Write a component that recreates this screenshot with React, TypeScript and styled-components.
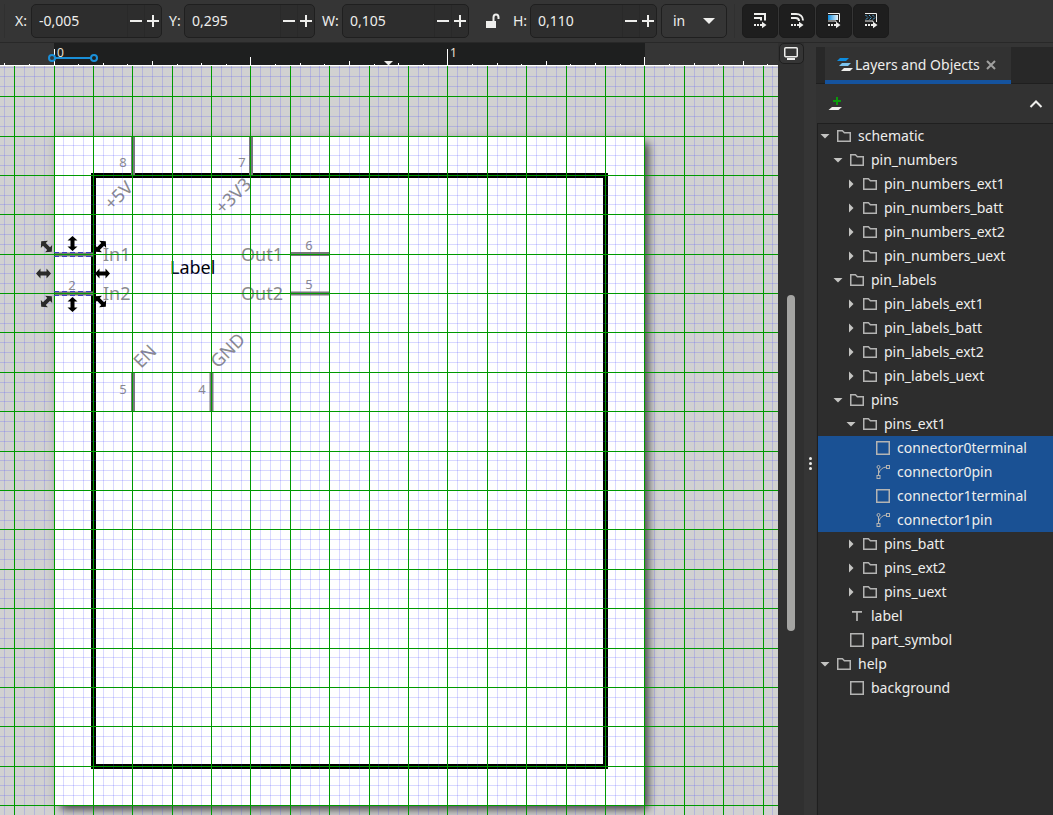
import React from 'react';
import styled, { createGlobalStyle } from 'styled-components';

const Global = createGlobalStyle`
  * { box-sizing: border-box; }
  html, body, #root { height: 100%; }
  body {
    margin: 0;
    background: #353535;
    color: #eeeeec;
    font: 14px/20px "Noto Sans", "Open Sans", sans-serif;
    overflow: hidden;
  }
  button, input, select { font: inherit; color: inherit; margin: 0; }
`;

const Window = styled.div`
  display: flex;
  flex-direction: column;
  height: 100vh;
`;

const Toolbar = styled.header`
  display: flex;
  align-items: center;
  flex: none;
  height: 43px;
  padding: 0 0 1px 4px;
  border-bottom: 1px solid #282828;
  background: #353535;
`;

const Separator = styled.i<{ $gap: number }>`
  width: 1px;
  height: 34px;
  margin-right: ${(p) => p.$gap}px;
  background: #303030;
`;

const FieldLabel = styled.label<{ $width: number }>`
  width: ${(p) => p.$width}px;
  flex: none;
`;

const SpinBox = styled.div<{ $width: number; $gap: number }>`
  display: flex;
  width: ${(p) => p.$width}px;
  height: 34px;
  margin-right: ${(p) => p.$gap}px;
  border: 1px solid #1f1f1f;
  border-radius: 5px;
  background: #2d2d2d;
  overflow: hidden;
`;

const SpinInput = styled.input`
  flex: 1;
  min-width: 0;
  padding: 0 7px;
  border: 0;
  outline: 0;
  background: none;
`;

const SpinButton = styled.button`
  display: flex;
  align-items: center;
  justify-content: center;
  width: 17px;
  padding: 0;
  border: 0;
  border-left: 1px solid #292929;
  background: none;
`;

const LockButton = styled.button`
  display: flex;
  width: 24px;
  margin: 0 4px 0 9px;
  padding: 0;
  border: 0;
  background: none;
`;

const UnitBox = styled.div`
  display: grid;
  align-items: center;
  width: 66px;
  height: 34px;
  margin-right: 7px;
  border: 1px solid #1f1f1f;
  border-radius: 5px;
  background: #353535;

  select {
    grid-area: 1 / 1;
    height: 32px;
    padding: 0 11px;
    border: 0;
    outline: 0;
    appearance: none;
    background: none;
  }
  svg {
    grid-area: 1 / 1;
    justify-self: end;
    margin-right: 11px;
    pointer-events: none;
  }
`;

const ToggleButton = styled.button`
  display: flex;
  align-items: center;
  justify-content: center;
  width: 36px;
  height: 34px;
  margin-right: 1px;
  padding: 0;
  border: 1px solid #1b1b1b;
  border-radius: 5px;
  background: #1e1e1e;
`;

const Main = styled.main`
  display: flex;
  flex: 1;
  min-height: 0;
`;

const Desk = styled.section`
  display: flex;
  flex-direction: column;
  flex: 1;
  min-width: 0;
`;

const RulerArea = styled.svg`
  display: block;
  flex: none;
  width: 100%;
  height: 23px;
  background: #353535;
`;

const CanvasArea = styled.svg`
  display: block;
  flex: 1;
  min-height: 0;
  width: 100%;
  background: #d1d1d1;
`;

const ScrollColumn = styled.div`
  display: flex;
  flex-direction: column;
  align-items: center;
  flex: none;
  width: 26px;
  background: #303030;
`;

const DisplayButton = styled.button`
  display: flex;
  align-items: center;
  justify-content: center;
  width: 25px;
  height: 21px;
  padding: 0;
  border: 1px solid #1f1f1f;
  border-radius: 5px;
  background: #353535;
`;

const ScrollTrack = styled.div`
  display: grid;
  flex: 1;
  grid-template-rows: 231fr 336fr 184fr;
`;

const ScrollThumb = styled.div`
  grid-row: 2;
  width: 8px;
  border-radius: 4px;
  background: #a4a4a2;
`;

const PaneHandle = styled.div`
  display: flex;
  flex-direction: column;
  align-items: center;
  justify-content: center;
  gap: 2px;
  flex: none;
  width: 12px;
  padding-top: 68px;
  background: #353535;

  i {
    width: 3px;
    height: 3px;
    border-radius: 2px;
    background: #eeeeec;
  }
`;

const Dock = styled.aside`
  flex: none;
  width: 237px;
  margin-top: 4px;
  background: #323232;
`;

const TabStrip = styled.div`
  display: flex;
  height: 37px;
  padding-left: 9px;
  border-bottom: 1px solid #1f1f1f;
  background: #282828;
`;

const Tab = styled.div`
  display: flex;
  align-items: center;
  width: 186px;
  height: 37px;
  padding: 2px 0 0 12px;
  border-bottom: 4px solid #15539e;
  background: #323232;
`;

const TabTitle = styled.span`
  width: 133px;
  padding-left: 2px;
  white-space: nowrap;
`;

const PlainButton = styled.button`
  display: flex;
  padding: 0;
  border: 0;
  background: none;
`;

const DockTools = styled.div`
  display: flex;
  align-items: center;
  justify-content: space-between;
  height: 39px;
  padding: 0 10px 0 12px;
`;

const Tree = styled.ul`
  margin: 0 0 0 1px;
  padding: 0;
  list-style: none;
  border: 1px solid #1f1f1f;
  border-width: 1px 0 0 1px;
  background: #2d2d2d;
  height: calc(100% - 76px);
`;

const TreeRow = styled.li<{ $depth: number; $selected: boolean }>`
  display: flex;
  align-items: center;
  height: 24px;
  padding-left: ${(p) => p.$depth * 13}px;
  background: ${(p) => (p.$selected ? '#1a5194' : 'transparent')};
  white-space: nowrap;

  svg { flex: none; }
`;

const Arrow = styled.svg`
  margin: 0 6px 0 1px;
`;

const ItemIcon = styled.svg`
  margin-right: 6px;
`;

type Kind = 'folder' | 'rect' | 'path' | 'text';
type Node = [name: string, depth: number, kind: Kind, state: 'open' | 'closed' | '', selected?: boolean];

const nodes: Node[] = [
  ['schematic', 0, 'folder', 'open'],
  ['pin_numbers', 1, 'folder', 'open'],
  ['pin_numbers_ext1', 2, 'folder', 'closed'],
  ['pin_numbers_batt', 2, 'folder', 'closed'],
  ['pin_numbers_ext2', 2, 'folder', 'closed'],
  ['pin_numbers_uext', 2, 'folder', 'closed'],
  ['pin_labels', 1, 'folder', 'open'],
  ['pin_labels_ext1', 2, 'folder', 'closed'],
  ['pin_labels_batt', 2, 'folder', 'closed'],
  ['pin_labels_ext2', 2, 'folder', 'closed'],
  ['pin_labels_uext', 2, 'folder', 'closed'],
  ['pins', 1, 'folder', 'open'],
  ['pins_ext1', 2, 'folder', 'open'],
  ['connector0terminal', 3, 'rect', '', true],
  ['connector0pin', 3, 'path', '', true],
  ['connector1terminal', 3, 'rect', '', true],
  ['connector1pin', 3, 'path', '', true],
  ['pins_batt', 2, 'folder', 'closed'],
  ['pins_ext2', 2, 'folder', 'closed'],
  ['pins_uext', 2, 'folder', 'closed'],
  ['label', 1, 'text', ''],
  ['part_symbol', 1, 'rect', ''],
  ['help', 0, 'folder', 'open'],
  ['background', 1, 'rect', ''],
];

function KindIcon({ kind }: { kind: Kind }) {
  const stroke = '#b4b4b3';
  return (
    <ItemIcon width="16" height="16" viewBox="0 0 16 16" fill="none" stroke={stroke} strokeWidth="1.5">
      {kind === 'folder' && <path d="M1.75 2.75H6.4L8.4 4.75H14.25V13.25H1.75Z" />}
      {kind === 'rect' && <rect x="1.75" y="1.75" width="12.5" height="12.5" />}
      {kind === 'path' && (
        <g strokeWidth="1">
          <circle cx="3.5" cy="3" r="1.5" />
          <rect x="11.5" y="1.5" width="3" height="3" />
          <rect x="2" y="11.5" width="3" height="3" />
          <path d="M3.5 4.5V11.5M3.7 9.5C5 5.5 7.5 3.2 11.5 3" />
        </g>
      )}
      {kind === 'text' && <path d="M3 3.8H13M8 3.8V13" strokeWidth="1.7" />}
    </ItemIcon>
  );
}

interface SpinProps {
  id: string;
  label: string;
  labelWidth: number;
  width: number;
  value: string;
  gap?: number;
}

function Spin({ id, label, labelWidth, width, value, gap = 7 }: SpinProps) {
  return (
    <>
      <FieldLabel htmlFor={id} $width={labelWidth}>{label}</FieldLabel>
      <SpinBox $width={width} $gap={gap}>
        <SpinInput id={id} defaultValue={value} />
        <SpinButton aria-label={`Decrease ${label}`}>
          <svg width="12" height="12" stroke="#eeeeec" strokeWidth="2"><path d="M0 6H12" /></svg>
        </SpinButton>
        <SpinButton aria-label={`Increase ${label}`}>
          <svg width="12" height="12" stroke="#eeeeec" strokeWidth="2"><path d="M0 6H12M6 0V12" /></svg>
        </SpinButton>
      </SpinBox>
    </>
  );
}

const dashArrow = (
  <path d="M0 11H2V13H0ZM3 11H5V13H3ZM6 11H9V13H6ZM8 8.800L12.500 12L8 15.200Z" fill="#eeeeec" />
);

function CornerIcon({ kind }: { kind: 'stroke' | 'corner' | 'gradient' | 'pattern' }) {
  return (
    <svg width="13" height="16" viewBox="0 0 13 16" fill="none">
      {kind === 'stroke' && <path d="M0 1H11V7.500M0 5H7V7.500" stroke="#eeeeec" strokeWidth="2" />}
      {kind === 'corner' && <path d="M0 1H5C9 1 12 3.500 12 7.500M0 5H4.500C7 5 8 6 8 8" stroke="#eeeeec" strokeWidth="2" />}
      {(kind === 'gradient' || kind === 'pattern') && <path d="M0 0.500H11.500V9M8 9V8H0" stroke="#eeeeec" />}
      {kind === 'gradient' && (
        <>
          <linearGradient id="fade"><stop stopColor="#0c8ce0" /><stop offset="1" stopColor="#e8f4fb" /></linearGradient>
          <rect y="2" width="10" height="5" fill="url(#fade)" />
        </>
      )}
      {kind === 'pattern' && <path d="M0.500 2L3 4.500L0.500 7M4 2L6.500 4.500L4 7M7.500 2L10 4.500L7.500 7" stroke="#4fb3ee" strokeDasharray="1.400 0.700" />}
      {dashArrow}
    </svg>
  );
}

// Spacing of a tenth of an inch on the desk at the current zoom.
const STEP = 39.39;
const ORIGIN_X = 54;
const ORIGIN_Y = 30.63;
const range = (from: number, to: number) => Array.from({ length: to - from }, (_, i) => i + from);

const rulerTicks = range(-3, 60).map((n) => {
  const x = Math.floor(ORIGIN_X + (n * STEP * 10) / 16);
  const h = n % 16 === 0 ? 17 : n % 8 === 0 ? 9 : n % 4 === 0 ? 5 : n % 2 === 0 ? 3 : 2;
  return `M${x}.5 ${23 - h}V23`;
}).join('');

const columns = range(-6, 160).map((n) => ({ n, at: Math.floor(ORIGIN_X + (n * STEP) / 4) }));
const rows = range(-4, 120).map((n) => ({ n, at: Math.floor(ORIGIN_Y + (n * STEP) / 4) }));
const gridPath = (major: boolean) =>
  columns.filter(({ n }) => (n % 4 === 0) === major).map(({ at }) => `M${at}.5 0V2000`).join('') +
  rows.filter(({ n }) => (n % 4 === 0) === major).map(({ at }) => `M0 ${at}.5H3000`).join('');

function Ruler() {
  return (
    <RulerArea>
      <rect x="54" width="591" height="23" fill="#1e1f1f" />
      <path d="M0 22.500H3000" stroke="#fff" />
      <path d={rulerTicks} stroke="#fff" />
      <path d="M384 18H393L388.500 22.500Z" fill="#eeeeec" />
      <g fontSize="12" fill="#e8e0d4">
        <text x="57" y="14">0</text>
        <text x="450" y="14">1</text>
      </g>
      <g stroke="#1a8fd8" strokeWidth="2" fill="none">
        <path d="M55 15H91" />
        <circle cx="52" cy="15" r="3" />
        <circle cx="94" cy="15" r="3" />
      </g>
    </RulerArea>
  );
}

const handles: [x: number, y: number, angle: number, light: boolean][] = [
  [46.500, 180.500, 45, true],
  [72.500, 177.500, 90, false],
  [100.500, 180.500, -45, false],
  [43.500, 207.500, 0, true],
  [102.500, 207.500, 0, false],
  [46.500, 235.500, -45, true],
  [72.500, 238.500, 90, false],
  [100.500, 235.500, 45, false],
];

function Canvas() {
  return (
    <CanvasArea>
      <defs>
        <filter id="soft" x="-10%" y="-10%" width="120%" height="120%"><feGaussianBlur stdDeviation="4" /></filter>
      </defs>
      <rect x="52" y="68" width="593" height="672" fill="#888" opacity="0.3" filter="url(#soft)" />
      <rect x="61" y="77" width="588" height="667" fill="#000" opacity="0.6" filter="url(#soft)" />
      <rect x="54" y="70" width="591" height="670" fill="#fff" />
      <rect x="93.500" y="109.500" width="512" height="591" fill="none" stroke="#000" strokeWidth="5" />

      <g stroke="#787878" strokeWidth="4">
        <path d="M133 70V109M251 70V109M133 306V345M211.500 306V345" />
        <path d="M290 188H329M290 227.500H329M54 188.500H93M54 227.500H93" />
      </g>
      <g fill="#8c8c8c">
        <g fontSize="13" textAnchor="middle">
          <text x="123" y="101">8</text>
          <text x="242" y="101">7</text>
          <text x="309" y="184">6</text>
          <text x="309" y="223">5</text>
          <text x="72" y="224">2</text>
          <text x="123" y="328">5</text>
          <text x="202" y="328">4</text>
        </g>
        <g fontSize="18">
          <text x="103" y="195">In1</text>
          <text x="103" y="234">In2</text>
          <text x="241" y="195">Out1</text>
          <text x="241" y="234">Out2</text>
          <text transform="translate(112 145) rotate(-45)">+5V</text>
          <text transform="translate(223 149) rotate(-45)">+3V3</text>
          <text transform="translate(141 303) rotate(-45)">EN</text>
          <text transform="translate(218 303) rotate(-45)">GND</text>
        </g>
        <text x="170" y="208" fontSize="18" fill="#000">Label</text>
      </g>

      <path d={gridPath(false)} stroke="#3f3fff" strokeOpacity="0.2" />
      <path d={gridPath(true)} stroke="#009900" />
      <path d="M54 186.500H94M54 190.500H94M54 225.500H94M54 229.500H94" stroke="#4040c0" strokeDasharray="5 3" />

      {handles.map(([x, y, angle, light]) => (
        <path
          key={`${x}-${y}`}
          transform={`translate(${x} ${y}) rotate(${angle})`}
          d="M-7.500 0L-3 -5V-2H3V-5L7.500 0L3 5V2H-3V5Z"
          fill={light ? '#2a2a2a' : '#000'}
        />
      ))}
    </CanvasArea>
  );
}

export default function App() {
  return (
    <Window>
      <Global />
      <Toolbar>
        <Separator $gap={10} />
        <Spin id="x" label="X:" labelWidth={16} width={131} value="-0,005" />
        <Spin id="y" label="Y:" labelWidth={15} width={131} value="0,295" />
        <Spin id="w" label="W:" labelWidth={20} width={127} value="0,105" />
        <LockButton aria-label="Lock width and height">
          <svg width="16" height="16" viewBox="0 0 16 16">
            <path d="M1 8H11V15H1Z" fill="#eeeeec" />
            <path d="M8.500 8V4.500C8.500 0.500 13.500 0.500 13.500 4.500V6" fill="none" stroke="#eeeeec" strokeWidth="2" />
          </svg>
        </LockButton>
        <Spin id="h" label="H:" labelWidth={17} width={127} value="0,110" gap={4} />
        <UnitBox>
          <select aria-label="Units"><option>in</option></select>
          <svg width="12" height="6"><path d="M0 0H12L6 6Z" fill="#eeeeec" /></svg>
        </UnitBox>
        <Separator $gap={7} />
        <ToggleButton aria-label="Scale stroke width"><CornerIcon kind="stroke" /></ToggleButton>
        <ToggleButton aria-label="Scale rounded corners"><CornerIcon kind="corner" /></ToggleButton>
        <ToggleButton aria-label="Move gradients"><CornerIcon kind="gradient" /></ToggleButton>
        <ToggleButton aria-label="Move patterns"><CornerIcon kind="pattern" /></ToggleButton>
      </Toolbar>
      <Main>
        <Desk>
          <Ruler />
          <Canvas />
        </Desk>
        <ScrollColumn>
          <DisplayButton aria-label="Display options">
            <svg width="14" height="13" viewBox="0 0 14 13" fill="none" stroke="#eeeeec">
              <rect x="0.750" y="0.750" width="12.500" height="9" rx="1" strokeWidth="1.500" />
              <path d="M3 12H11" strokeWidth="2" />
            </svg>
          </DisplayButton>
          <ScrollTrack><ScrollThumb /></ScrollTrack>
        </ScrollColumn>
        <PaneHandle><i /><i /><i /></PaneHandle>
        <Dock>
          <TabStrip>
            <Tab>
              <svg width="16" height="14" viewBox="0 0 16 14">
                <path d="M3 0H12L9 3H0Z" fill="#0c8ce0" />
                <path d="M5 5H14L11 8H2Z" fill="#7cc4ee" />
                <path d="M7 10H16L13 13H4Z" fill="#eeeeec" />
              </svg>
              <TabTitle>Layers and Objects</TabTitle>
              <PlainButton aria-label="Close tab">
                <svg width="10" height="10" stroke="#a0a09f" strokeWidth="2"><path d="M1 1L9 9M9 1L1 9" /></svg>
              </PlainButton>
            </Tab>
          </TabStrip>
          <DockTools>
            <PlainButton aria-label="Add layer">
              <svg width="15" height="14" viewBox="0 0 15 14">
                <path d="M9 0V8M5 4H13" stroke="#0a9a0a" strokeWidth="2" />
                <path d="M4 10H14L10.500 13H0.500Z" fill="#eeeeec" />
              </svg>
            </PlainButton>
            <PlainButton aria-label="Collapse">
              <svg width="14" height="8" fill="none" stroke="#eeeeec" strokeWidth="2"><path d="M1.500 7L7 1.500L12.500 7" /></svg>
            </PlainButton>
          </DockTools>
          <Tree>
            {nodes.map(([name, depth, kind, state, selected]) => (
              <TreeRow key={name} $depth={depth} $selected={!!selected}>
                <Arrow width="11" height="10" viewBox="0 0 11 10" fill="#c4c4c2">
                  {state === 'open' && <path d="M1.500 3H10.500L6 7.500Z" />}
                  {state === 'closed' && <path d="M4 0.500V9.500L8.500 5Z" />}
                </Arrow>
                <KindIcon kind={kind} />
                {name}
              </TreeRow>
            ))}
          </Tree>
        </Dock>
      </Main>
    </Window>
  );
}
